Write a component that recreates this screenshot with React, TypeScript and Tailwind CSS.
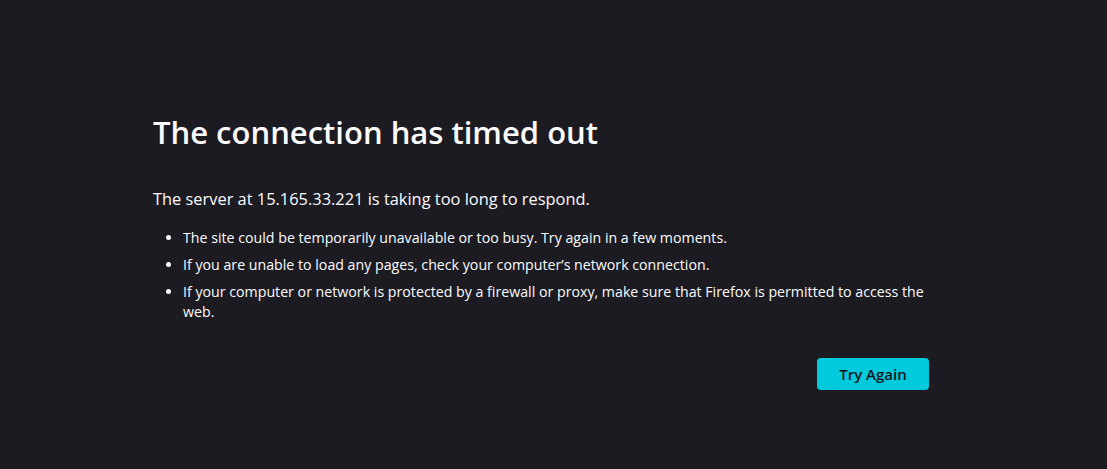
export default function App() {
  const items = [
    "The site could be temporarily unavailable or too busy. Try again in a few moments.",
    "If you are unable to load any pages, check your computer’s network connection.",
    "If your computer or network is protected by a firewall or proxy, make sure that Firefox is permitted to access the web.",
  ];

  return (
    <div className="h-[469px] overflow-hidden bg-[#1c1b22] text-[#fbfbfe] font-['Open_Sans',sans-serif]">
      <div className="ml-[153px] w-[776px] pt-[110px]">
        <h1 className="text-[31px] font-semibold leading-[44px]">The connection has timed out</h1>
        <p className="mt-[33px] text-[16.4px] leading-[24px]">
          The server at 15.165.33.221 is taking too long to respond.
        </p>
        <ul className="mt-[17px] list-disc pl-[30px] text-[14.2px] leading-[20px]">
          {items.map((t) => (
            <li key={t} className="mb-[7px]">
              {t}
            </li>
          ))}
        </ul>
        <div className="mt-[36px] flex justify-end">
          <button className="h-[32px] w-[112px] rounded-[4px] bg-[#00cadb] text-[15px] font-semibold text-[#15141a]">
            Try Again
          </button>
        </div>
      </div>
    </div>
  );
}
